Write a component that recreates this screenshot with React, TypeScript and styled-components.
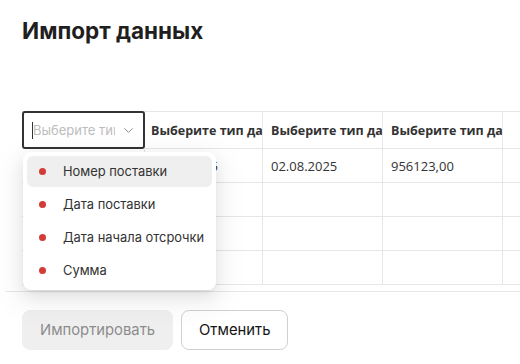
import React from "react";
import styled, { createGlobalStyle } from "styled-components";
import { ChevronDown } from "lucide-react";

const GlobalStyle = createGlobalStyle`
  html, body {
    margin: 0;
    background: #fff;
    font-family: Inter, "Noto Sans", sans-serif;
    color: #222;
  }
  * { box-sizing: border-box; }
`;

const Page = styled.div`
  width: 520px;
  height: 364px;
  overflow: hidden;
  padding: 14px 0 0 22px;
`;

const Title = styled.h1`
  margin: 0;
  font-family: Inter, sans-serif;
  font-size: 22.5px;
  font-weight: 700;
  line-height: 34px;
  color: #1f1f1f;
`;

const TableArea = styled.div`
  position: relative;
  margin-top: 63px;
`;

const Grid = styled.div`
  display: grid;
  grid-template-columns: 123px 118px 120px 120px 120px;
  border-top: 1px solid #e6e6e6;
  font-family: "Open Sans", sans-serif;
  font-size: 13px;
  color: #333;
`;

const Cell = styled.div<{ $head?: boolean; $first?: boolean }>`
  height: ${(p) => (p.$head ? "37px" : "34px")};
  padding: 0 8px 0 ${(p) => (p.$first ? "6px" : "8px")};
  border-bottom: 1px solid #e6e6e6;
  border-right: 1px solid #e6e6e6;
  display: flex;
  align-items: center;
  white-space: nowrap;
  overflow: hidden;
  font-weight: ${(p) => (p.$head ? 700 : 400)};
  font-size: ${(p) => (p.$head ? "12.5px" : "13px")};
`;

const SelectCell = styled.div`
  height: 38px;
  margin-top: -1px;
  width: 123px;
  border: 2px solid #333;
  border-radius: 3px;
  display: flex;
  align-items: center;
  padding: 0 7px 0 8px;
  gap: 6px;
  position: relative;
  z-index: 1;
  background: #fff;
  font-family: Inter, sans-serif;
`;

const Caret = styled.span`
  width: 1px;
  height: 17px;
  background: #333;
  flex: none;
`;

const Placeholder = styled.span`
  flex: 1;
  margin-left: -6px;
  color: #bdbdbd;
  font-size: 13px;
  white-space: nowrap;
  overflow: hidden;
`;

const ScrollLine = styled.div`
  margin: 6px 0 0 -16px;
  border-bottom: 1px solid #e6e6e6;
`;

const Dropdown = styled.div`
  position: absolute;
  left: 1px;
  top: 41px;
  width: 193px;
  padding: 4px;
  background: #fff;
  border-radius: 8px;
  display: flex;
  flex-direction: column;
  gap: 2px;
  z-index: 2;
  box-shadow: 0 6px 16px 0 rgba(0, 0, 0, 0.08),
    0 3px 6px -4px rgba(0, 0, 0, 0.12), 0 9px 28px 8px rgba(0, 0, 0, 0.05);
`;

const Option = styled.div<{ $active?: boolean }>`
  height: 31px;
  border-radius: 6px;
  display: flex;
  align-items: center;
  padding-left: 12px;
  gap: 17px;
  font-size: 12.9px;
  color: #333;
  background: ${(p) => (p.$active ? "#efefef" : "transparent")};
`;

const Dot = styled.span`
  width: 7px;
  height: 7px;
  border-radius: 50%;
  background: #d33b36;
  flex: none;
`;

const Actions = styled.div`
  display: flex;
  gap: 8px;
  margin-top: 18px;
`;

const Button = styled.button<{ $disabled?: boolean }>`
  height: 40px;
  padding: 0 17px;
  border-radius: 8px;
  font-family: Inter, sans-serif;
  font-size: 14.8px;
  border: 1px solid ${(p) => (p.$disabled ? "#efefef" : "#d0d0d0")};
  background: ${(p) => (p.$disabled ? "#efefef" : "#fff")};
  color: ${(p) => (p.$disabled ? "#8c8c8c" : "#141414")};
`;

const options = [
  "Номер поставки",
  "Дата поставки",
  "Дата начала отсрочки",
  "Сумма",
];

const headers = ["Выберите тип данных", "Выберите тип данных", "Выберите тип данных", ""];

const rows = [
  ["", "000012345", "02.08.2025", "956123,00", ""],
  ["", "", "", "", ""],
  ["", "", "", "", ""],
  ["", "", "", "", ""],
];

export default function App() {
  return (
    <>
      <GlobalStyle />
      <Page>
        <Title>Импорт данных</Title>
        <TableArea>
          <Grid>
            <SelectCell>
              <Caret />
              <Placeholder>Выберите тип данных</Placeholder>
              <ChevronDown size={15} color="#8c8c8c" strokeWidth={1.6} />
            </SelectCell>
            {headers.map((h, i) => (
              <Cell key={i} $head $first={i === 0}>
                {h}
              </Cell>
            ))}
            {rows.map((r, i) =>
              r.map((v, j) => (
                <Cell key={`${i}-${j}`} $first={j === 1}>
                  {v}
                </Cell>
              ))
            )}
          </Grid>
          <ScrollLine />
          <Dropdown>
            {options.map((o, i) => (
              <Option key={o} $active={i === 0}>
                <Dot />
                {o}
              </Option>
            ))}
          </Dropdown>
        </TableArea>
        <Actions>
          <Button $disabled>Импортировать</Button>
          <Button>Отменить</Button>
        </Actions>
      </Page>
    </>
  );
}
